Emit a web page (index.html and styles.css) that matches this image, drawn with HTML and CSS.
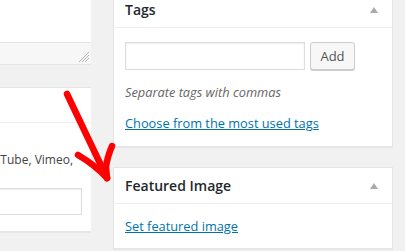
FILE: index.html
```html
<!DOCTYPE html>
<html lang="en">
<head>
    <meta charset="UTF-8">
    <meta name="viewport" content="width=device-width, initial-scale=1.0">
    <title>Edit Post</title>
    <link rel="stylesheet" href="styles.css">
</head>
<body>
    <div class="left">
        <div class="editor">
            <div class="editor-area"></div>
            <div class="editor-status">
                <svg class="grip" width="12" height="11" viewBox="0 0 12 11">
                    <path d="M11 1 L1 11 M11 4 L4 11 M11 7 L7 11" stroke="#b4b4b4" stroke-width="1"/>
                </svg>
            </div>
        </div>
        <div class="box video-box">
            <div class="box-head"></div>
            <div class="video-body">
                <p class="video-text">Paste the embed URL from YouTube, Vimeo,</p>
                <input type="text" class="video-input">
            </div>
        </div>
    </div>

    <div class="right">
        <div class="box">
            <div class="box-head">
                <h3>Tags</h3>
                <span class="toggle"></span>
            </div>
            <div class="tags-body">
                <div class="tag-row">
                    <input type="text" class="tag-input">
                    <button class="add">Add</button>
                </div>
                <p class="howto">Separate tags with commas</p>
                <a href="#" class="link">Choose from the most used tags</a>
            </div>
        </div>
        <div class="box featured">
            <div class="box-head">
                <h3>Featured Image</h3>
                <span class="toggle"></span>
            </div>
            <div class="featured-body">
                <a href="#" class="link">Set featured image</a>
            </div>
        </div>
    </div>

    <svg class="arrow" width="405" height="251" viewBox="0 0 405 251">
        <g fill="none" stroke="#f00" stroke-width="6.5" stroke-linecap="round" stroke-linejoin="round">
            <path d="M67 94 L107 178"/>
            <path d="M78 155 Q95 165 107 178"/>
            <path d="M112 146 Q107 158 106 167 L107 178"/>
        </g>
    </svg>
</body>
</html>
```

FILE: styles.css
```css
body {
    margin: 0;
    background: #f1f1f1;
    font-family: "Open Sans", "Liberation Sans", sans-serif;
    font-size: 12.8px;
    color: #444;
    display: flex;
    gap: 22px;
    height: 251px;
    overflow: hidden;
}
.left {
    width: 91px;
    flex-shrink: 0;
    overflow: hidden;
}
.editor {
    width: 400px;
    margin-left: -309px;
    background: #fff;
    border: 1px solid #e5e5e5;
    border-top: none;
}
.editor-area {
    height: 42px;
}
.editor-status {
    height: 21px;
    border-top: 1px solid #e5e5e5;
    background: #f7f7f7;
    display: flex;
    justify-content: flex-end;
    align-items: flex-end;
    padding-right: 2px;
}
.grip {
    margin-bottom: 2px;
}
.box {
    background: #fff;
    border: 1px solid #e5e5e5;
    box-shadow: 0 1px 1px rgba(0, 0, 0, 0.04);
}
.video-box {
    width: 400px;
    margin-left: -310px;
    margin-top: 22px;
}
.video-box .box-head {
    height: 34px;
}
.video-body {
    padding: 27px 9px 16px 0;
}
.video-text {
    margin: 0;
    font-size: 12px;
    line-height: 20px;
    text-align: right;
    white-space: nowrap;
    padding-right: 9px;
}
.video-input {
    display: block;
    box-sizing: border-box;
    width: 100%;
    height: 27px;
    margin-top: 18px;
    border: 1px solid #ddd;
    box-shadow: inset 0 1px 2px rgba(0, 0, 0, 0.07);
}
.right {
    width: 280px;
    flex-shrink: 0;
    margin-top: -9px;
}
.box-head {
    height: 35px;
    border-bottom: 1px solid #eee;
    display: flex;
    align-items: center;
    justify-content: space-between;
    padding: 0 14px 0 11px;
}
.box-head h3 {
    margin: 0;
    font-size: 14px;
    font-weight: 600;
    color: #23282d;
}
.toggle {
    width: 0;
    height: 0;
    border-left: 4.5px solid transparent;
    border-right: 4.5px solid transparent;
    border-bottom: 6px solid #aaa;
}
.tags-body {
    padding: 14px 11px 13px;
}
.tag-row {
    display: flex;
    gap: 5px;
}
.tag-input {
    box-sizing: border-box;
    width: 180px;
    height: 28px;
    margin: 0;
    border: 1px solid #ddd;
    box-shadow: inset 0 1px 2px rgba(0, 0, 0, 0.07);
}
.add {
    box-sizing: border-box;
    width: 45px;
    height: 28px;
    margin: 0;
    padding: 0;
    background: #f7f7f7;
    border: 1px solid #ccc;
    border-radius: 3px;
    box-shadow: 0 1px 0 #ccc;
    font-family: inherit;
    font-size: 13px;
    color: #555;
}
.howto {
    margin: 13px 0 12px;
    font-style: italic;
    color: #666;
    line-height: 19px;
}
.link {
    display: block;
    color: #0073aa;
    line-height: 19px;
}
.featured {
    margin-top: 20px;
}
.featured-body {
    padding: 13px 11px 12px;
}
.arrow {
    position: absolute;
    left: 0;
    top: 0;
    pointer-events: none;
}
```
